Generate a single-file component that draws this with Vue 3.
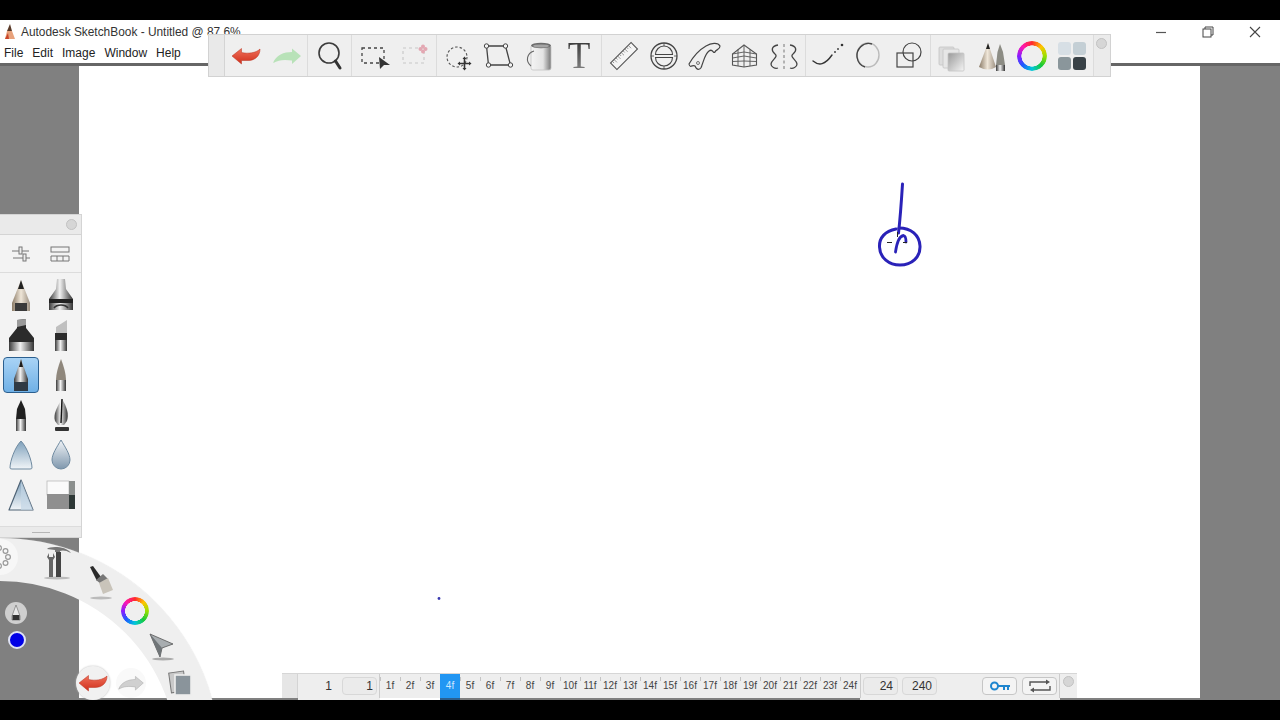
<script setup>
const frames = Array.from({ length: 24 }, (_, i) => i + 1)
const menus = ['File', 'Edit', 'Image', 'Window', 'Help']
</script>

<template>
  <div class="screen">
    <!-- shared paints and shapes -->
    <svg class="defs" width="0" height="0">
      <defs>
        <linearGradient id="red" x1="0" y1="0" x2="0" y2="1">
          <stop offset="0" stop-color="#f0705a" />
          <stop offset="1" stop-color="#cf2f1c" />
        </linearGradient>
        <linearGradient id="steel" x1="0" y1="0" x2="1" y2="0">
          <stop offset="0" stop-color="#3a3a3a" />
          <stop offset=".45" stop-color="#f2f2f2" />
          <stop offset="1" stop-color="#333" />
        </linearGradient>
        <linearGradient id="wood" x1="0" y1="0" x2="1" y2="0">
          <stop offset="0" stop-color="#8a7a66" />
          <stop offset=".5" stop-color="#efe6d8" />
          <stop offset="1" stop-color="#9b8f80" />
        </linearGradient>
        <linearGradient id="can" x1="0" y1="0" x2="1" y2="0">
          <stop offset="0" stop-color="#f4f4f4" />
          <stop offset=".6" stop-color="#e4e4e4" />
          <stop offset="1" stop-color="#777" />
        </linearGradient>
        <linearGradient id="cone" x1="0" y1="0" x2="0" y2="1">
          <stop offset="0" stop-color="#7ea0bb" />
          <stop offset="1" stop-color="#f1f5f8" />
        </linearGradient>
        <linearGradient id="drop" x1="0" y1="0" x2="0" y2="1">
          <stop offset="0" stop-color="#f2f5f8" />
          <stop offset="1" stop-color="#7f97ad" />
        </linearGradient>
        <linearGradient id="page" x1="0" y1="0" x2="1" y2="1">
          <stop offset="0" stop-color="#999" />
          <stop offset="1" stop-color="#f5f5f5" />
        </linearGradient>
        <symbol id="back" viewBox="0 0 34 34">
          <path d="M3 17 L12.5 9.5 V13.5 C19 15 27 14 31 10 C31 17 26 21.5 19 21.5 H12.5 V25 Z" />
        </symbol>
        <symbol id="forward" viewBox="0 0 34 34">
          <path d="M31 17 L22 9.5 V13 C14 13 6 16 3 24 C9 20.5 15 20.5 22 21.5 V25 Z" />
        </symbol>
      </defs>
    </svg>

    <div class="window">
      <div class="titlebar">
        <svg class="app-logo" viewBox="0 0 12 16" width="12" height="16">
          <path d="M6 0 L8 7 L3 7 Z" fill="#5a3a28" />
          <path d="M3 7 L8 7 L11 15 L1 15 Z" fill="#e8a27c" />
          <path d="M1 15 L4 9 L5 15 Z" fill="#c8452a" />
        </svg>
        <span class="title">Autodesk SketchBook - Untitled @ 87.6%</span>
        <div class="win-buttons">
          <svg viewBox="0 0 12 12" width="12" height="12"><path d="M1 6.5 H11" stroke="#555" stroke-width="1.2" /></svg>
          <svg viewBox="0 0 12 12" width="12" height="12" fill="none" stroke="#444" stroke-width="1"><rect x="1" y="3" width="8" height="8" /><path d="M3 3 V1 H11 V9 H9" /></svg>
          <svg viewBox="0 0 12 12" width="12" height="12"><path d="M1 1 L11 11 M11 1 L1 11" stroke="#444" stroke-width="1.1" /></svg>
        </div>
      </div>
      <div class="menubar">
        <span v-for="m in menus" :key="m">{{ m }}</span>
      </div>

      <div class="workspace">
        <div class="canvas">
          <svg class="drawing" viewBox="79 66 1121 632">
            <g fill="none" stroke="#2a22b8" stroke-linecap="round">
              <path d="M902.5 184 C901.5 200 900.5 216 898.5 233" stroke-width="3" />
              <path d="M896 229 C885 231 879 238 879.5 247 C880 258 889 265 900 265 C912 265 920.5 257 920 246 C919.5 235 911 228 899 228" stroke-width="3" />
              <path d="M895.5 252 C896.5 245 899 236 903.5 235.5 C906 236 906 239 906 242" stroke-width="2.8" />
            </g>
            <path d="M887 242.5 H892 M903 242.5 H907 M897.5 232 V237" stroke="#222" stroke-width="1" />
            <circle cx="439" cy="598.5" r="1.4" fill="#3a3ab0" />
          </svg>
        </div>
      </div>

      <!-- main toolbar -->
      <div class="toolbar">
        <div class="tb-handle"></div>
        <div class="tb-group w83">
          <svg class="ic w41" viewBox="0 0 34 34"><use href="#back" fill="url(#red)" stroke="#b8301f" stroke-width=".5" /></svg>
          <svg class="ic w41" viewBox="0 0 34 34"><use href="#forward" fill="#b8e2b8" /></svg>
        </div>
        <div class="tb-group w44">
          <svg class="ic" viewBox="0 0 34 34" fill="none">
            <circle cx="16" cy="14" r="10" stroke="#3c3c3c" stroke-width="1.6" />
            <path d="M22.5 22 L27 29" stroke="#333" stroke-width="3" stroke-linecap="round" />
          </svg>
        </div>
        <div class="tb-group w85">
          <svg class="ic w41" viewBox="0 0 34 34">
            <rect x="5" y="9" width="22" height="15" fill="none" stroke="#444" stroke-width="1.3" stroke-dasharray="3 3" />
            <path d="M22 18 L33 26 L27 26 L23 30 Z" fill="#333" />
          </svg>
          <svg class="ic w41" viewBox="0 0 34 34">
            <rect x="5" y="9" width="21" height="15" fill="none" stroke="#c8c8c8" stroke-width="1.2" stroke-dasharray="3 3" />
            <g fill="#e3a7b2"><circle cx="25" cy="7.5" r="2" /><circle cx="25" cy="12.5" r="2" /><circle cx="22.5" cy="10" r="2" /><circle cx="27.5" cy="10" r="2" /></g>
          </svg>
        </div>
        <div class="tb-group w165">
          <svg class="ic" viewBox="0 0 34 34" fill="none">
            <circle cx="15" cy="18" r="10" stroke="#555" stroke-width="1.1" stroke-dasharray="2.5 2" />
            <path d="M22.5 19 V30 M17 24.5 H28" stroke="#333" stroke-width="1.6" />
            <path d="M22.5 17.5 L20.5 20 H24.5 Z M22.5 31.5 L20.5 29 H24.5 Z M15.5 24.5 L18 22.5 V26.5 Z M29.5 24.5 L27 22.5 V26.5 Z" fill="#333" />
          </svg>
          <svg class="ic" viewBox="0 0 34 34">
            <path d="M4.5 7 H23.5 L28.5 26 H6.5 Z" fill="none" stroke="#444" stroke-width="1.3" />
            <g fill="#f4f4f4" stroke="#444"><circle cx="4.5" cy="7" r="2.2" /><circle cx="23.5" cy="7" r="2.2" /><circle cx="28.5" cy="26" r="2.2" /><circle cx="6.5" cy="26" r="2.2" /></g>
          </svg>
          <svg class="ic" viewBox="0 0 34 34">
            <rect x="9" y="6" width="20" height="25" rx="2" fill="url(#can)" stroke="#c4c4c4" stroke-width=".8" />
            <ellipse cx="19" cy="6.5" rx="10" ry="2.8" fill="#6c6c6c" />
            <ellipse cx="19" cy="7" rx="8" ry="1.6" fill="#a5a5a5" />
            <path d="M12 12 C5 14 3 22 9 27" fill="none" stroke="#666" stroke-width="1.1" />
          </svg>
          <div class="ic tee">T</div>
        </div>
        <div class="tb-group w204">
          <svg class="ic" viewBox="0 0 34 34">
            <g transform="rotate(-45 17 17)">
              <rect x="2.5" y="12.5" width="29" height="9" fill="#f5f5f5" stroke="#555" stroke-width="1.1" />
              <path d="M5 12.5 V15 M7.5 12.5 V16.5 M10 12.5 V15 M12.5 12.5 V16.5 M15 12.5 V15 M17.5 12.5 V16.5 M20 12.5 V15 M22.5 12.5 V16.5 M25 12.5 V15 M27.5 12.5 V16.5" stroke="#777" stroke-width=".7" />
            </g>
          </svg>
          <svg class="ic" viewBox="0 0 34 34" fill="none" stroke="#444">
            <circle cx="17" cy="17" r="13" stroke-width="1.3" />
            <path d="M8.5 15.5 A8.5 8.5 0 0 1 25.5 15.5 Z M8.5 18.5 A8.5 8.5 0 0 0 25.5 18.5 Z" stroke-width="1.1" />
            <path d="M17 4 V7 M17 27 V30 M4 17 H7 M27 17 H30" stroke-width=".8" />
          </svg>
          <svg class="ic" viewBox="0 0 34 34">
            <path d="M2 25 C6 18 12 11 19 7 C24 4 31 3 33 7 C33 11 29 10 28 13 C26 15 26 9 22 12 C18 15 17 21 15 26 C14 31 10 32 8 27 C6 25 3 30 2 25 Z" fill="#efefef" stroke="#444" stroke-width="1.2" />
            <circle cx="11" cy="24" r="1.5" fill="none" stroke="#555" stroke-width=".8" />
          </svg>
          <svg class="ic" viewBox="0 0 34 34" fill="none" stroke="#555" stroke-width=".9">
            <path d="M17 6 L29.5 15 V26 L17 28 L5.5 26 V15 Z" stroke-width="1.1" />
            <path d="M17 6 V28 M11 10.5 V27 M23 10.5 V27 M5.5 19 L17 17 L29.5 19 M5.5 22.5 L17 22 L29.5 22.5 M5.5 15 L17 13 L29.5 15" />
          </svg>
          <svg class="ic" viewBox="0 0 34 34" fill="none" stroke="#444" stroke-width="1.3">
            <path d="M17 5 V30" stroke="#777" stroke-width="1" stroke-dasharray="3 2.5" />
            <path d="M11 6 C4 7 4 12 8 15 C12 18 4 21 4 25 C4 28 8 30 11 29" />
            <path d="M23 6 C30 7 30 12 26 15 C22 18 30 21 30 25 C30 28 26 30 23 29" />
          </svg>
        </div>
        <div class="tb-group w125">
          <svg class="ic" viewBox="0 0 34 34">
            <path d="M2 22 C8 27 14 26 21 16" fill="none" stroke="#333" stroke-width="1.4" stroke-linecap="round" />
            <circle cx="24" cy="13" r="1" fill="#444" /><circle cx="27" cy="10" r="1" fill="#444" /><circle cx="31" cy="6" r="1.3" fill="#333" />
          </svg>
          <svg class="ic" viewBox="0 0 34 34" fill="none">
            <ellipse cx="17" cy="16" rx="11" ry="12" stroke="#bbb" stroke-width="1.4" />
            <path d="M21 5 C12 2 5 11 6 18 C7 24 10 27 14 28" stroke="#444" stroke-width="1.4" />
          </svg>
          <svg class="ic" viewBox="0 0 34 34" fill="none" stroke="#444" stroke-width="1.2">
            <rect x="6" y="14" width="16" height="14" />
            <circle cx="21" cy="13" r="9" />
          </svg>
        </div>
        <div class="tb-group w163">
          <svg class="ic" viewBox="0 0 34 34">
            <g stroke="#c4c4c4" stroke-width=".8">
              <rect x="4" y="8" width="15" height="18" rx="1" fill="#ddd" />
              <rect x="8" y="10" width="16" height="19" rx="1" fill="#e6e6e6" />
              <rect x="13" y="14" width="16" height="18" rx="1" fill="url(#page)" />
            </g>
          </svg>
          <svg class="ic" viewBox="0 0 34 34">
            <path d="M13 4 L21 28 Q13 33 4 28 Z" fill="url(#wood)" />
            <path d="M13 4 L15 10 H11 Z" fill="#222" />
            <path d="M25 5 L28 13 L30 26 H21 L22.5 13 Z" fill="#8c8c84" />
            <rect x="21" y="26" width="9" height="6" fill="url(#steel)" />
          </svg>
          <div class="ic wheel-cell"><div class="wheel big"></div></div>
          <div class="ic swatches">
            <i style="background:#d7dfe5"></i><i style="background:#c4cfd5"></i>
            <i style="background:#8a969b"></i><i style="background:#394247"></i>
          </div>
        </div>
        <div class="tb-end"><span class="dot"></span></div>
      </div>

      <!-- brush palette -->
      <div class="palette">
        <div class="pal-head"><span class="dot"></span></div>
        <div class="pal-tabs">
          <svg viewBox="0 0 24 20" width="24" height="20" fill="none" stroke="#777">
            <path d="M3 7 H20 M4 14 H21" /><rect x="10" y="3" width="3" height="7" fill="#eee" /><rect x="14" y="10" width="3" height="7" fill="#eee" />
          </svg>
          <svg viewBox="0 0 24 20" width="24" height="20" fill="none" stroke="#777">
            <rect x="3" y="3" width="18" height="5" /><path d="M3 12 H21 V17 H3 Z M9 12 V17 M15 12 V17" />
          </svg>
        </div>
        <div class="brushes">
          <div class="brush">
            <svg viewBox="0 0 36 36" width="36" height="36">
              <path d="M18 3 L27 26 V34 H9 V26 Z" fill="url(#wood)" />
              <path d="M18 3 L21 12 H15 Z" fill="#222" />
              <rect x="12" y="26" width="12" height="8" fill="#3a3a3a" />
            </svg>
          </div>
          <div class="brush">
            <svg viewBox="0 0 36 36" width="36" height="36">
              <path d="M14 2 H22 L23 12 L30 22 V33 H6 V22 L13 12 Z" fill="url(#steel)" />
              <path d="M6 22 H30 V26 H6 Z" fill="#222" />
              <path d="M11 31 C14 27 22 27 25 31" fill="none" stroke="#333" stroke-width="1.6" />
            </svg>
          </div>
          <div class="brush">
            <svg viewBox="0 0 36 36" width="36" height="36">
              <path d="M14 3 L23 2 V11 L31 21 V34 H6 V21 L14 11 Z" fill="#2b2b2b" />
              <path d="M14 3 L23 2 V8 L14 10 Z" fill="#9a9a9a" />
              <rect x="6" y="25" width="25" height="9" fill="url(#steel)" />
            </svg>
          </div>
          <div class="brush">
            <svg viewBox="0 0 36 36" width="36" height="36">
              <path d="M13 10 L24 3 V16 H13 Z" fill="#bfbfbf" />
              <rect x="12" y="16" width="12" height="7" fill="#2b2b2b" />
              <rect x="12" y="23" width="12" height="11" fill="url(#steel)" />
            </svg>
          </div>
          <div class="brush selected">
            <svg viewBox="0 0 36 36" width="36" height="36">
              <path d="M18 2 L25 22 V34 H11 V22 Z" fill="url(#steel)" />
              <path d="M18 2 L20 10 H16 Z" fill="#1c1c1c" />
              <rect x="11" y="25" width="14" height="9" fill="#2f3a45" />
            </svg>
          </div>
          <div class="brush">
            <svg viewBox="0 0 36 36" width="36" height="36">
              <path d="M18 2 C21 10 23 17 23 23 H13 C13 17 15 10 18 2 Z" fill="#8f877c" />
              <rect x="13" y="23" width="10" height="11" fill="url(#steel)" />
            </svg>
          </div>
          <div class="brush">
            <svg viewBox="0 0 36 36" width="36" height="36">
              <path d="M18 3 L22 12 L23 22 H13 L14 12 Z" fill="#1f1f1f" />
              <rect x="13" y="22" width="10" height="12" fill="url(#steel)" />
            </svg>
          </div>
          <div class="brush">
            <svg viewBox="0 0 36 36" width="36" height="36">
              <path d="M19 2 C24 10 26 17 24 24 L21 28 H15 L12 24 C10 17 14 10 19 2 Z" fill="url(#steel)" />
              <path d="M19 2 L18 26" stroke="#111" stroke-width="1.4" />
              <rect x="12" y="30" width="14" height="4" rx="1" fill="#333" />
            </svg>
          </div>
          <div class="brush">
            <svg viewBox="0 0 36 36" width="36" height="36">
              <path d="M18 4 C24 10 29 24 29 31 Q29 32 27 32 H9 Q7 32 7 31 C7 24 12 10 18 4 Z" fill="url(#cone)" stroke="#6f8aa0" stroke-width="1" />
            </svg>
          </div>
          <div class="brush">
            <svg viewBox="0 0 36 36" width="36" height="36">
              <path d="M18 3 C22 10 27 17 27 23 A9 9 0 0 1 9 23 C9 17 14 10 18 3 Z" fill="url(#drop)" stroke="#6f8aa0" stroke-width="1" />
            </svg>
          </div>
          <div class="brush">
            <svg viewBox="0 0 36 36" width="36" height="36">
              <path d="M18 3 L30 33 H6 Z" fill="url(#cone)" stroke="#4f6375" stroke-width="1.2" stroke-linejoin="round" />
              <path d="M18 3 L30 33 H18 Z" fill="#c3d6e6" opacity=".7" />
            </svg>
          </div>
          <div class="brush">
            <svg viewBox="0 0 36 36" width="36" height="36">
              <rect x="4" y="4" width="22" height="14" fill="#fafafa" stroke="#bbb" stroke-width=".8" />
              <rect x="4" y="17" width="22" height="15" fill="#8f8f8f" />
              <rect x="26" y="4" width="6" height="14" fill="#8b8f8d" />
              <rect x="26" y="18" width="6" height="14" fill="#2e3836" />
            </svg>
          </div>
        </div>
        <div class="pal-foot"><span></span></div>
      </div>

      <!-- radial marking menu -->
      <div class="ring"></div>
      <div class="puck-spot">
        <svg viewBox="0 0 28 28" width="28" height="28" fill="none" stroke="#9a9a9a" stroke-width="1.2">
          <circle cx="14" cy="5" r="2.4" /><circle cx="20.5" cy="8" r="2.4" /><circle cx="23" cy="14" r="2.4" /><circle cx="20.5" cy="20" r="2.4" /><circle cx="14" cy="23" r="2.4" /><circle cx="7.5" cy="20" r="2.4" />
        </svg>
      </div>
      <svg class="radial tools" viewBox="0 0 30 36" width="30" height="36">
        <ellipse cx="15" cy="33" rx="13" ry="1.5" fill="#bbb" />
        <path d="M5 4 C8 1 24 1 29 8 C24 5 20 5 18 6 V7 H13 V5 Z" fill="#777" />
        <rect x="14" y="7" width="5" height="25" fill="#444" />
        <path d="M7 8 L5 12 L7 15 V32 H11 V15 L13 12 L11 8 V12 H7 Z" fill="#666" />
      </svg>
      <svg class="radial paint" viewBox="0 0 30 36" width="30" height="36">
        <ellipse cx="15" cy="33" rx="11" ry="1.5" fill="#bbb" />
        <path d="M4 2 L7 1 L15 12 L11 16 Z" fill="#2a2a2a" />
        <path d="M10 15 L17 9 L22 14 L15 19 Z" fill="#777" />
        <path d="M13 18 L22 13 L27 25 L17 29 Z" fill="#c9c4ba" />
      </svg>
      <div class="radial wheel small"></div>
      <svg class="radial cursor" viewBox="0 0 26 30" width="26" height="30">
        <ellipse cx="14" cy="27" rx="11" ry="1.5" fill="#aaa" />
        <path d="M1 2 L24 12 L13 16 L11 25 Z" fill="#a8adb0" stroke="#555" stroke-width=".8" />
        <path d="M1 2 L13 16 L11 25 Z" fill="#6f7477" />
      </svg>
      <svg class="radial sheets" viewBox="0 0 26 28" width="26" height="28">
        <rect x="3" y="3" width="15" height="20" fill="#c9c9c9" stroke="#777" transform="rotate(-8 10 13)" />
        <rect x="8" y="6" width="16" height="20" fill="#8a949b" stroke="#eee" stroke-width="1.6" />
      </svg>
      <div class="round-btn undo">
        <svg viewBox="0 0 34 34" width="34" height="34"><use href="#back" fill="url(#red)" stroke="#b8301f" stroke-width=".5" /></svg>
      </div>
      <div class="round-btn redo">
        <svg viewBox="0 0 34 34" width="32" height="32"><use href="#forward" fill="#d0d0d0" stroke="#aaa" stroke-width=".6" /></svg>
      </div>
      <div class="puck pen">
        <svg viewBox="0 0 14 18" width="14" height="18">
          <path d="M7 1 L11 12 V16 H3 V12 Z" fill="#e9e9e9" stroke="#666" stroke-width=".6" />
          <rect x="3.5" y="11" width="7" height="5" fill="#333" />
        </svg>
      </div>
      <div class="puck color"></div>

      <!-- timeline -->
      <div class="timeline">
        <div class="tl-row">
          <div class="tl-handle"></div>
          <div class="tl-start">
            <span class="num">1</span>
            <span class="field small-field">1</span>
          </div>
          <div class="frames">
            <span v-for="f in frames" :key="f" class="frame" :class="{ active: f === 4 }">{{ f }}f</span>
          </div>
          <div class="tl-controls">
            <span class="field count">24</span>
            <span class="field total">240</span>
            <span class="tl-btn key">
              <svg viewBox="0 0 22 12" width="22" height="12" fill="none" stroke="#1f86cf" stroke-width="2">
                <circle cx="5.5" cy="6" r="3.5" /><path d="M9 6 H21 M15 6 V10 M19 6 V10" />
              </svg>
            </span>
            <span class="tl-btn loop">
              <svg viewBox="0 0 22 14" width="22" height="14" fill="none" stroke="#555" stroke-width="1.4">
                <path d="M1 7 V3 H18 M21 7 V11 H4" /><path d="M17 0.5 L21 3 L17 5.5 Z M5 8.5 L1 11 L5 13.5 Z" fill="#555" stroke="none" />
              </svg>
            </span>
          </div>
          <div class="tl-end"><span class="dot"></span></div>
        </div>
        <div class="tl-under">
          <span class="u-left"></span>
          <span class="u-white"></span>
          <span class="u-current"></span>
          <span class="u-gap"></span>
          <span class="u-right"></span>
        </div>
      </div>
    </div>
  </div>
</template>

<style scoped>
.screen {
  width: 1280px;
  height: 720px;
  box-sizing: border-box;
  padding: 20px 0;
  background: #000;
  font-family: "Liberation Sans", Arial, sans-serif;
  overflow: hidden;
}
.defs {
  position: absolute;
}
.window {
  position: relative;
  height: 680px;
  display: flex;
  flex-direction: column;
  background: #fff;
  overflow: hidden;
}
.titlebar {
  height: 23px;
  display: flex;
  align-items: center;
  padding-left: 4px;
  font-size: 11.9px;
  color: #333;
  flex: none;
}
.app-logo {
  margin-right: 5px;
}
.win-buttons {
  margin-left: auto;
  display: flex;
  gap: 35px;
  padding-right: 19px;
}
.menubar {
  height: 20px;
  display: flex;
  align-items: center;
  gap: 9px;
  padding-left: 4px;
  font-size: 12px;
  color: #222;
  flex: none;
}
.workspace {
  flex: 1;
  display: flex;
  background: #808080;
  border-top: 3px solid #666;
  padding: 0 80px 2px 79px;
}
.canvas {
  flex: 1;
  position: relative;
  background: #fff;
}
.drawing {
  position: absolute;
  inset: 0;
  width: 100%;
  height: 100%;
}

.dot {
  display: block;
  width: 11px;
  height: 11px;
  border-radius: 50%;
  background: #d6d6d6;
  border: 1px solid #c2c2c2;
  box-sizing: border-box;
}

.toolbar {
  position: absolute;
  left: 208px;
  top: 14px;
  width: 903px;
  height: 43px;
  box-sizing: border-box;
  display: flex;
  background: #efefef;
  border: 1px solid #d2d2d2;
}
.tb-handle {
  width: 16px;
  flex: none;
  box-sizing: border-box;
  background: #e9e9e9;
  border-right: 1px solid #d4d4d4;
}
.tb-group {
  flex: none;
  box-sizing: border-box;
  display: flex;
  align-items: center;
  justify-content: center;
  border-right: 1px solid #dcdcdc;
}
.w83 { width: 83px; }
.w44 { width: 44px; }
.w85 { width: 85px; }
.w165 { width: 165px; }
.w204 { width: 204px; }
.w125 { width: 125px; }
.w163 { width: 163px; }
.ic {
  width: 34px;
  height: 34px;
  margin: 0 3px;
  flex: none;
}
.ic.w41 {
  margin: 0 3.5px;
}
.tee {
  font-family: "Liberation Serif", serif;
  font-size: 37px;
  line-height: 34px;
  text-align: center;
  background: linear-gradient(#333, #888);
  -webkit-background-clip: text;
  background-clip: text;
  color: transparent;
}
.tb-end {
  flex: 1;
  padding: 3px 0 0 2px;
  background: #ebebeb;
}
.wheel-cell {
  display: flex;
  align-items: center;
  justify-content: center;
}
.wheel {
  border-radius: 50%;
  background: conic-gradient(#ff2a2a, #ffc400, #9be000, #18c93a, #00c8d8, #1c5cff, #8a1cff, #ff18b0, #ff2a2a);
  -webkit-mask: radial-gradient(circle, transparent 49%, #000 51%);
  mask: radial-gradient(circle, transparent 49%, #000 51%);
}
.wheel.big {
  width: 30px;
  height: 30px;
}
.swatches {
  display: grid;
  grid-template-columns: 13px 13px;
  grid-auto-rows: 13px;
  gap: 2px;
  align-content: center;
  justify-content: center;
}
.swatches i {
  border-radius: 3px;
}

.palette {
  position: absolute;
  left: 0;
  top: 194px;
  width: 82px;
  height: 324px;
  box-sizing: border-box;
  display: flex;
  flex-direction: column;
  background: #f3f3f3;
  border: 1px solid #d4d4d4;
  border-left: 0;
}
.pal-head {
  height: 19px;
  flex: none;
  display: flex;
  justify-content: flex-end;
  align-items: center;
  padding-right: 4px;
  background: #eaeaea;
  border-bottom: 1px solid #d4d4d4;
}
.pal-tabs {
  height: 37px;
  flex: none;
  display: flex;
  justify-content: space-around;
  align-items: center;
  padding: 0 1px;
  border-bottom: 1px solid #dcdcdc;
}
.brushes {
  flex: 1;
  display: grid;
  grid-template-columns: 40px 40px;
  grid-auto-rows: 40px;
  padding: 2px 0 0 1px;
  justify-items: center;
  align-items: center;
}
.brush {
  width: 36px;
  height: 36px;
  box-sizing: border-box;
}
.brush.selected {
  background: linear-gradient(#a9d3f5, #6fb0e6);
  border: 1px solid #2b5f8f;
  border-radius: 4px;
}
.brush.selected svg {
  margin: -1px;
}
.pal-foot {
  height: 10px;
  flex: none;
  display: flex;
  align-items: center;
  justify-content: center;
  background: #eaeaea;
  border-top: 1px solid #dcdcdc;
}
.pal-foot span {
  width: 18px;
  height: 1px;
  background: #b5b5b5;
}

.ring {
  position: absolute;
  left: -220px;
  top: 518px;
  width: 440px;
  height: 440px;
  box-sizing: border-box;
  border: 43px solid #efefef;
  border-radius: 50%;
  box-shadow: 0 0 1px #ccc;
}
.puck-spot {
  position: absolute;
  left: -18px;
  top: 519px;
  width: 36px;
  height: 36px;
  border-radius: 50%;
  background: #f7f7f7;
  display: flex;
  align-items: center;
  justify-content: center;
}
.puck-spot svg {
  flex: none;
  margin-left: -3px;
}
.radial {
  position: absolute;
}
.tools { left: 42px; top: 525px; }
.paint { left: 86px; top: 545px; }
.wheel.small {
  left: 121px;
  top: 577px;
  width: 28px;
  height: 28px;
}
.cursor { left: 149px; top: 612px; }
.sheets { left: 167px; top: 649px; }
.round-btn {
  position: absolute;
  border-radius: 50%;
  display: flex;
  align-items: center;
  justify-content: center;
}
.undo {
  left: 76px;
  top: 646px;
  width: 34px;
  height: 34px;
  background: #f1f1f1;
  box-shadow: 0 0 2px #bbb;
}
.redo {
  left: 116px;
  top: 648px;
  width: 30px;
  height: 30px;
  background: #f9f9f9;
}
.puck {
  position: absolute;
  border-radius: 50%;
  box-sizing: border-box;
  display: flex;
  align-items: center;
  justify-content: center;
}
.pen {
  left: 5px;
  top: 582px;
  width: 22px;
  height: 22px;
  background: #cfcfcf;
}
.color {
  left: 8px;
  top: 611px;
  width: 18px;
  height: 18px;
  background: #0000e6;
  border: 2px solid #dfe3f5;
}

.timeline {
  position: absolute;
  left: 282px;
  top: 653px;
  width: 795px;
  height: 27px;
  display: flex;
  flex-direction: column;
}
.tl-row {
  height: 25px;
  flex: none;
  display: flex;
  background: #eeeeee;
  border-top: 1px solid #d6d6d6;
  box-sizing: border-box;
  font-size: 11px;
  color: #333;
}
.tl-handle {
  width: 16px;
  flex: none;
  background: #e6e6e6;
  border-right: 1px solid #d4d4d4;
  box-sizing: border-box;
}
.tl-start {
  width: 82px;
  flex: none;
  box-sizing: border-box;
  display: flex;
  align-items: center;
  justify-content: flex-end;
  padding-right: 2px;
  gap: 10px;
  border-right: 1px solid #ccc;
}
.num {
  font-size: 12px;
}
.field {
  height: 18px;
  box-sizing: border-box;
  display: inline-block;
  line-height: 16px;
  text-align: right;
  background: #ebebeb;
  border: 1px solid #d8d8d8;
  border-radius: 4px;
  padding-right: 3px;
  font-size: 12px;
}
.small-field {
  width: 35px;
}
.frames {
  width: 480px;
  flex: none;
  display: flex;
}
.frame {
  width: 20px;
  flex: none;
  text-align: center;
  line-height: 24px;
  font-size: 10px;
  color: #444;
  background: linear-gradient(#c4c4c4, #c4c4c4) left 3px / 1px 4px no-repeat;
}
.frame.active {
  background: #2196f3;
  color: #cfe8ff;
}
.tl-controls {
  width: 200px;
  flex: none;
  box-sizing: border-box;
  display: flex;
  align-items: center;
  padding: 0 2px;
  gap: 4px;
  border-left: 1px solid #ccc;
  border-right: 1px solid #ccc;
}
.count, .total {
  width: 35px;
  padding-right: 4px;
}
.tl-btn {
  width: 35px;
  height: 18px;
  box-sizing: border-box;
  display: flex;
  align-items: center;
  justify-content: center;
  border: 1px solid #c6c6c6;
  border-radius: 4px;
  background: #f4f4f4;
}
.key {
  margin-left: 41px;
}
.loop {
  margin-left: 1px;
}
.tl-end {
  flex: 1;
  padding: 2px 0 0 3px;
}
.tl-under {
  height: 2px;
  display: flex;
}
.tl-under span {
  display: block;
  flex: none;
}
.u-left {
  width: 82px;
  margin-left: 16px;
  background: #eee;
}
.u-white {
  width: 60px;
  background: #fff;
}
.u-current {
  width: 20px;
  background: #2b5f8f;
}
.u-gap {
  width: 400px;
}
.u-right {
  width: 200px;
  background: #eee;
}
</style>

<style>
html, body {
  margin: 0;
  background: #000;
}
</style>
